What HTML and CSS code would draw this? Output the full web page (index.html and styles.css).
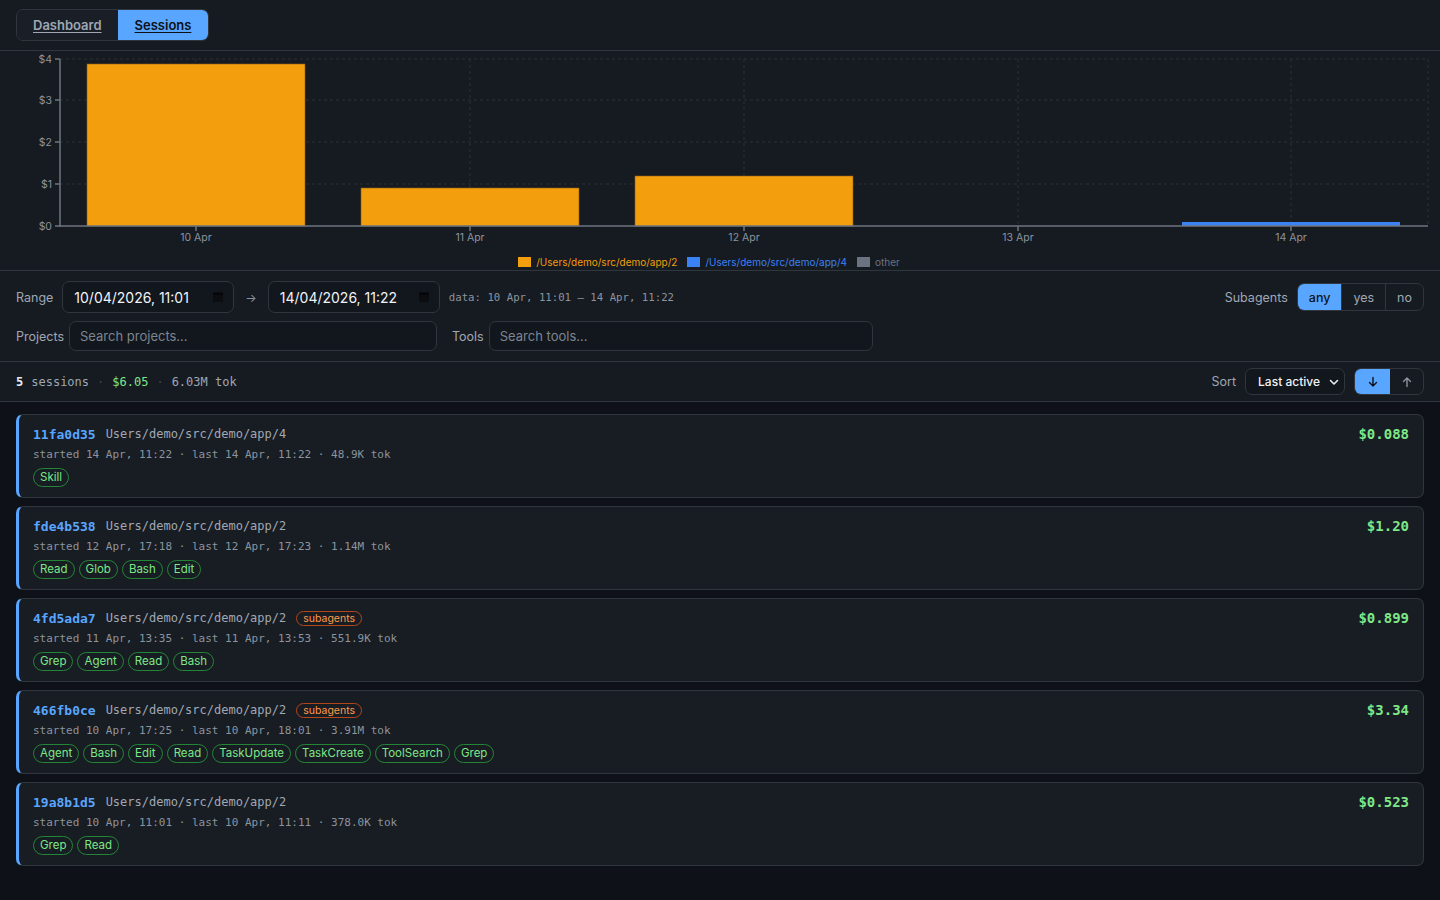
FILE: index.html
```html
<!DOCTYPE html>
<html lang="en">
<head>
<meta charset="utf-8">
<title>Sessions</title>
<link rel="stylesheet" href="styles.css">
</head>
<body>
<header class="topbar">
  <nav class="tabs">
    <a class="tab" href="#">Dashboard</a>
    <a class="tab tab-active" href="#">Sessions</a>
  </nav>
</header>

<section class="chart">
  <svg class="chart-svg" width="1440" height="200" viewBox="0 0 1440 200">
    <g class="grid">
      <line x1="60" y1="8" x2="1428" y2="8"/>
      <line x1="60" y1="49" x2="1428" y2="49"/>
      <line x1="60" y1="91" x2="1428" y2="91"/>
      <line x1="60" y1="133" x2="1428" y2="133"/>
      <line x1="196" y1="8" x2="196" y2="175"/>
      <line x1="470" y1="8" x2="470" y2="175"/>
      <line x1="744" y1="8" x2="744" y2="175"/>
      <line x1="1018" y1="8" x2="1018" y2="175"/>
      <line x1="1291" y1="8" x2="1291" y2="175"/>
      <line x1="1428" y1="8" x2="1428" y2="175"/>
    </g>
    <g class="bars">
      <rect class="bar-orange" x="87" y="13" width="218" height="162"/>
      <rect class="bar-orange" x="361" y="137" width="218" height="38"/>
      <rect class="bar-orange" x="635" y="125" width="218" height="50"/>
      <rect class="bar-blue" x="1182" y="171" width="218" height="4"/>
    </g>
    <g class="axis">
      <line x1="60" y1="8" x2="60" y2="175.5"/>
      <line x1="59.25" y1="175" x2="1428" y2="175"/>
      <line x1="55" y1="8" x2="60" y2="8"/>
      <line x1="55" y1="49" x2="60" y2="49"/>
      <line x1="55" y1="91" x2="60" y2="91"/>
      <line x1="55" y1="133" x2="60" y2="133"/>
      <line x1="55" y1="175" x2="60" y2="175"/>
      <line x1="196" y1="175" x2="196" y2="180"/>
      <line x1="470" y1="175" x2="470" y2="180"/>
      <line x1="744" y1="175" x2="744" y2="180"/>
      <line x1="1018" y1="175" x2="1018" y2="180"/>
      <line x1="1291" y1="175" x2="1291" y2="180"/>
    </g>
    <g class="ylabels">
      <text x="52" y="12">$4</text>
      <text x="52" y="53">$3</text>
      <text x="52" y="95">$2</text>
      <text x="52" y="137">$1</text>
      <text x="52" y="179">$0</text>
    </g>
    <g class="xlabels">
      <text x="196" y="190">10 Apr</text>
      <text x="470" y="190">11 Apr</text>
      <text x="744" y="190">12 Apr</text>
      <text x="1018" y="190">13 Apr</text>
      <text x="1291" y="190">14 Apr</text>
    </g>
  </svg>
  <div class="legend">
    <span class="legend-item legend-orange"><i class="swatch swatch-orange"></i>/Users/demo/src/demo/app/2</span>
    <span class="legend-item legend-blue"><i class="swatch swatch-blue"></i>/Users/demo/src/demo/app/4</span>
    <span class="legend-item legend-gray"><i class="swatch swatch-gray"></i>other</span>
  </div>
</section>

<section class="filters">
  <div class="filter-row">
    <div class="range">
      <span class="label">Range</span>
      <div class="date-field"><span>10/04/2026, 11:01</span>
        <svg class="cal" width="12" height="12" viewBox="0 0 12 12"><rect x="1" y="1.5" width="10" height="9.5" rx="1.5" fill="#0b0d11"/><rect x="1" y="1.5" width="10" height="2.5" fill="#05070a"/></svg>
      </div>
      <span class="arrow">→</span>
      <div class="date-field"><span>14/04/2026, 11:22</span>
        <svg class="cal" width="12" height="12" viewBox="0 0 12 12"><rect x="1" y="1.5" width="10" height="9.5" rx="1.5" fill="#0b0d11"/><rect x="1" y="1.5" width="10" height="2.5" fill="#05070a"/></svg>
      </div>
      <span class="data-range">data: 10 Apr, 11:01 – 14 Apr, 11:22</span>
    </div>
    <div class="subagents">
      <span class="label">Subagents</span>
      <div class="segmented">
        <button class="seg seg-active">any</button>
        <button class="seg">yes</button>
        <button class="seg">no</button>
      </div>
    </div>
  </div>
  <div class="filter-row filter-row-search">
    <span class="label">Projects</span>
    <input class="search search-projects" type="text" placeholder="Search projects...">
    <span class="label label-tools">Tools</span>
    <input class="search search-tools" type="text" placeholder="Search tools...">
  </div>
</section>

<section class="summary">
  <div class="summary-stats">
    <b class="count">5</b><span class="muted">sessions</span>
    <span class="dot">·</span>
    <span class="total">$6.05</span>
    <span class="dot">·</span>
    <span class="muted">6.03M tok</span>
  </div>
  <div class="sort">
    <span class="label">Sort</span>
    <div class="select"><span>Last active</span>
      <svg width="10" height="10" viewBox="0 0 10 10"><path d="M1.5 3.5 L5 7 L8.5 3.5" fill="none" stroke="#e6edf3" stroke-width="1.6" stroke-linecap="round" stroke-linejoin="round"/></svg>
    </div>
    <div class="order">
      <button class="ord ord-active"><svg width="12" height="12" viewBox="0 0 12 12"><path d="M6 1.5 V10 M2.5 6.5 L6 10 L9.5 6.5" fill="none" stroke="#0d1117" stroke-width="1.4" stroke-linecap="round" stroke-linejoin="round"/></svg></button>
      <button class="ord"><svg width="12" height="12" viewBox="0 0 12 12"><path d="M6 10.5 V2 M2.5 5.5 L6 2 L9.5 5.5" fill="none" stroke="#8b949e" stroke-width="1.4" stroke-linecap="round" stroke-linejoin="round"/></svg></button>
    </div>
  </div>
</section>

<main class="list">
  <article class="card">
    <div class="card-main">
      <div class="title"><span class="sid">11fa0d35</span><span class="path">Users/demo/src/demo/app/4</span></div>
      <div class="meta">started 14 Apr, 11:22 · last 14 Apr, 11:22 · 48.9K tok</div>
      <div class="tags"><span class="tag">Skill</span></div>
    </div>
    <div class="cost">$0.088</div>
  </article>
  <article class="card">
    <div class="card-main">
      <div class="title"><span class="sid">fde4b538</span><span class="path">Users/demo/src/demo/app/2</span></div>
      <div class="meta">started 12 Apr, 17:18 · last 12 Apr, 17:23 · 1.14M tok</div>
      <div class="tags"><span class="tag">Read</span><span class="tag">Glob</span><span class="tag">Bash</span><span class="tag">Edit</span></div>
    </div>
    <div class="cost">$1.20</div>
  </article>
  <article class="card">
    <div class="card-main">
      <div class="title"><span class="sid">4fd5ada7</span><span class="path">Users/demo/src/demo/app/2</span><span class="badge">subagents</span></div>
      <div class="meta">started 11 Apr, 13:35 · last 11 Apr, 13:53 · 551.9K tok</div>
      <div class="tags"><span class="tag">Grep</span><span class="tag">Agent</span><span class="tag">Read</span><span class="tag">Bash</span></div>
    </div>
    <div class="cost">$0.899</div>
  </article>
  <article class="card">
    <div class="card-main">
      <div class="title"><span class="sid">466fb0ce</span><span class="path">Users/demo/src/demo/app/2</span><span class="badge">subagents</span></div>
      <div class="meta">started 10 Apr, 17:25 · last 10 Apr, 18:01 · 3.91M tok</div>
      <div class="tags"><span class="tag">Agent</span><span class="tag">Bash</span><span class="tag">Edit</span><span class="tag">Read</span><span class="tag">TaskUpdate</span><span class="tag">TaskCreate</span><span class="tag">ToolSearch</span><span class="tag">Grep</span></div>
    </div>
    <div class="cost">$3.34</div>
  </article>
  <article class="card">
    <div class="card-main">
      <div class="title"><span class="sid">19a8b1d5</span><span class="path">Users/demo/src/demo/app/2</span></div>
      <div class="meta">started 10 Apr, 11:01 · last 10 Apr, 11:11 · 378.0K tok</div>
      <div class="tags"><span class="tag">Grep</span><span class="tag">Read</span></div>
    </div>
    <div class="cost">$0.523</div>
  </article>
</main>
</body>
</html>
```

FILE: styles.css
```css
* { box-sizing: border-box; }

html, body {
  margin: 0;
  padding: 0;
}

body {
  background: #0e1117;
  color: #e6edf3;
  font-family: Inter, "Noto Sans", "DejaVu Sans", sans-serif;
  font-size: 13px;
  min-height: 900px;
}

.topbar {
  background: #161a21;
  border-bottom: 1px solid #30363d;
  height: 51px;
  padding: 9px 16px 0;
}

.tabs {
  display: inline-flex;
  border: 1px solid #30363d;
  border-radius: 7px;
  overflow: hidden;
  height: 32px;
}

.tab {
  display: flex;
  align-items: center;
  padding: 0 16px;
  font-size: 13px;
  font-weight: 600;
  color: #9ea7b3;
  background: #1a1e26;
  text-decoration: underline;
  text-underline-offset: 2px;
}

.tab-active {
  background: #58a6ff;
  color: #0d1117;
  padding: 0 17px;
}

.chart {
  background: #161a21;
  border-bottom: 1px solid #30363d;
  height: 220px;
}

.chart-svg {
  display: block;
}

.grid line {
  stroke: #2a3039;
  stroke-width: 1;
  stroke-dasharray: 3 3;
}

.axis line {
  stroke: #6e7681;
  stroke-width: 1.5;
}

.bar-orange {
  fill: #f39e0d;
  stroke: #8a5a10;
  stroke-width: 0.6;
}

.bar-blue {
  fill: #3b82f6;
}

.ylabels text {
  fill: #8b949e;
  font-size: 10.5px;
  text-anchor: end;
  font-family: Inter, "DejaVu Sans", sans-serif;
}

.xlabels text {
  fill: #8b949e;
  font-size: 10.5px;
  text-anchor: middle;
  font-family: Inter, "DejaVu Sans", sans-serif;
}

.legend {
  display: flex;
  justify-content: center;
  gap: 10px;
  margin-top: 4px;
  height: 14px;
  line-height: 14px;
  font-size: 10px;
  padding-right: 22px;
}

.legend-item {
  display: inline-flex;
  align-items: center;
  gap: 5px;
}

.swatch {
  display: inline-block;
  width: 13px;
  height: 10px;
}

.swatch-orange { background: #f39e0d; }
.swatch-blue { background: #3b82f6; }
.swatch-gray { background: #6b7280; }
.legend-orange { color: #f39e0d; }
.legend-blue { color: #3b82f6; }
.legend-gray { color: #6b7280; }

.filters {
  background: #161a21;
  border-bottom: 1px solid #30363d;
  padding: 10px 16px 10px;
  display: flex;
  flex-direction: column;
  gap: 8px;
}

.filter-row {
  display: flex;
  align-items: center;
  justify-content: space-between;
  height: 32px;
}

.range, .subagents, .sort {
  display: flex;
  align-items: center;
}

.label {
  color: #a0a8b3;
  font-size: 12.5px;
}

.range .label { margin-right: 9px; }

.date-field {
  display: flex;
  align-items: center;
  justify-content: space-between;
  width: 172px;
  height: 32px;
  padding: 0 9px 0 11px;
  background: #12161d;
  border: 1px solid #30363d;
  border-radius: 7px;
  color: #f0f3f6;
  font-size: 14px;
}

.arrow {
  color: #8b949e;
  font-size: 12px;
  margin: 0 11px;
}

.data-range {
  font-family: "DejaVu Sans Mono", "Liberation Mono", monospace;
  font-size: 10.7px;
  color: #8b949e;
  margin-left: 9px;
}

.subagents .label { margin-right: 9px; }

.segmented {
  display: flex;
  border: 1px solid #30363d;
  border-radius: 7px;
  overflow: hidden;
  height: 28px;
}

.seg {
  border: 0;
  border-left: 1px solid #30363d;
  background: transparent;
  color: #a0a8b3;
  font-family: inherit;
  font-size: 12.5px;
  padding: 0 11px;
}

.seg:first-child { border-left: 0; }

.seg-active {
  background: #58a6ff;
  color: #0d1117;
  font-weight: 500;
  padding: 0 11px;
}

.filter-row-search {
  justify-content: flex-start;
  height: 30px;
}

.search {
  height: 30px;
  background: #12161d;
  border: 1px solid #30363d;
  border-radius: 7px;
  color: #e6edf3;
  font-family: inherit;
  font-size: 13px;
  padding: 0 10px;
  outline: none;
}

.search::placeholder { color: #7d8590; }

.search-projects { width: 368px; margin-left: 5px; }
.label-tools { margin-left: 15px; }
.search-tools { width: 384px; margin-left: 5px; }

.summary {
  background: #161a21;
  border-bottom: 1px solid #30363d;
  height: 40px;
  padding: 0 16px;
  display: flex;
  align-items: center;
  justify-content: space-between;
}

.summary-stats {
  font-family: "DejaVu Sans Mono", "Liberation Mono", monospace;
  font-size: 12px;
  display: flex;
  align-items: center;
  gap: 6px;
}

.count { color: #e6edf3; font-weight: 700; margin-right: 2px; }
.muted { color: #9ea7b3; }
.dot { color: #3d444d; margin: 0 2px; }
.total { color: #7ee787; }

.sort .label { margin-right: 9px; }

.select {
  display: flex;
  align-items: center;
  gap: 9px;
  height: 27px;
  padding: 0 5px 0 12px;
  background: #12161d;
  border: 1px solid #30363d;
  border-radius: 7px;
  color: #f0f3f6;
  font-size: 12px;
  font-weight: 500;
  white-space: nowrap;
  flex-shrink: 0;
}

.order {
  display: flex;
  margin-left: 9px;
  border: 1px solid #30363d;
  border-radius: 7px;
  overflow: hidden;
  height: 27px;
}

.ord {
  width: 33px;
  border: 0;
  background: transparent;
  display: flex;
  align-items: center;
  justify-content: center;
  padding: 0;
}

.ord-active { background: #58a6ff; width: 35px; }

.list {
  padding: 12px 16px 24px;
  display: flex;
  flex-direction: column;
  gap: 8px;
}

.card {
  display: flex;
  justify-content: space-between;
  align-items: flex-start;
  background: #181c23;
  border: 1px solid #30363d;
  border-left: 3px solid #58a6ff;
  border-radius: 7px;
  padding: 9px 14px 10px 14px;
  height: 84px;
}

.title {
  display: flex;
  align-items: center;
  height: 20px;
  font-family: "DejaVu Sans Mono", "Liberation Mono", monospace;
}

.sid {
  color: #58a6ff;
  font-weight: 700;
  font-size: 13px;
  margin-right: 10px;
}

.path {
  color: #a0a8b3;
  font-size: 12px;
}

.badge {
  font-family: Inter, "DejaVu Sans", sans-serif;
  font-size: 10.5px;
  color: #ff9a4a;
  border: 1px solid #b3471a;
  border-radius: 8px;
  padding: 0 6px;
  line-height: 13px;
  margin-left: 10px;
}

.meta {
  font-family: "DejaVu Sans Mono", "Liberation Mono", monospace;
  font-size: 11px;
  color: #8b949e;
  line-height: 16px;
  margin-top: 3px;
  white-space: pre;
}

.tags {
  display: flex;
  gap: 4px;
  margin-top: 5px;
}

.tag {
  font-size: 11.5px;
  color: #7ee787;
  border: 1px solid #238636;
  border-radius: 10px;
  padding: 0 6px;
  line-height: 17px;
}

.cost {
  font-family: "DejaVu Sans Mono", "Liberation Mono", monospace;
  font-weight: 700;
  font-size: 14px;
  color: #7ee787;
  line-height: 20px;
}
```
